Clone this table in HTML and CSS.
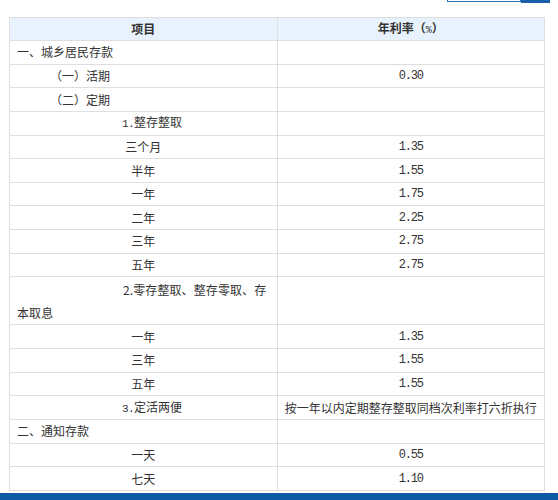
FILE: index.html
```html
<!DOCTYPE html>
<html lang="zh-CN">
<head>
<meta charset="utf-8">
<title>存款利率</title>
<link rel="stylesheet" href="styles.css">
</head>
<body>
<div class="topbar">
  <div class="search">
    <div class="search-input"></div>
    <div class="search-btn"></div>
  </div>
</div>
<table class="rates">
  <thead>
    <tr class="head"><th>项目</th><th>年利率（<span class="pct">%</span>）</th></tr>
  </thead>
  <tbody>
    <tr><td class="l1">一、城乡居民存款</td><td></td></tr>
    <tr><td class="l2">（一）活期</td><td class="num">0.30</td></tr>
    <tr><td class="l2">（二）定期</td><td></td></tr>
    <tr><td class="l3"><span class="n">1.</span>整存整取</td><td></td></tr>
    <tr><td class="c">三个月</td><td class="num">1.35</td></tr>
    <tr><td class="c">半年</td><td class="num">1.55</td></tr>
    <tr><td class="c">一年</td><td class="num">1.75</td></tr>
    <tr><td class="c">二年</td><td class="num">2.25</td></tr>
    <tr><td class="c">三年</td><td class="num">2.75</td></tr>
    <tr><td class="c">五年</td><td class="num">2.75</td></tr>
    <tr class="double"><td class="l3 wrap">2.零存整取、整存零取、存本取息</td><td></td></tr>
    <tr><td class="c">一年</td><td class="num">1.35</td></tr>
    <tr><td class="c">三年</td><td class="num">1.55</td></tr>
    <tr><td class="c">五年</td><td class="num">1.55</td></tr>
    <tr><td class="l3"><span class="n">3.</span>定活两便</td><td class="c">按一年以内定期整存整取同档次利率打六折执行</td></tr>
    <tr><td class="l1">二、通知存款</td><td></td></tr>
    <tr><td class="c">一天</td><td class="num">0.55</td></tr>
    <tr><td class="c">七天</td><td class="num">1.10</td></tr>
  </tbody>
</table>
<div class="footer"></div>
</body>
</html>
```
FILE: styles.css
```css
html, body {
  margin: 0;
  padding: 0;
  background: #ffffff;
}
body {
  width: 558px;
  height: 500px;
  overflow: hidden;
  font-family: "Noto Sans CJK SC", "Noto Sans", sans-serif;
  font-size: 12px;
  color: #333333;
}
.topbar {
  height: 17px;
  display: flex;
  justify-content: flex-end;
  padding-right: 8px;
}
.search {
  display: flex;
  height: 3px;
}
.search-input {
  width: 72px;
  height: 1px;
  border: 1px solid #2d6db3;
  border-top: none;
  background: #ffffff;
}
.search-btn {
  width: 29px;
  height: 3px;
  background: #1b5ea9;
}
.rates {
  margin-left: 9px;
  width: 536px;
  border-collapse: collapse;
  table-layout: fixed;
}
.rates tr {
  height: 23.65px;
}
.rates tr.head {
  height: 23px;
}
.rates tr.double {
  height: 48px;
}
.rates th,
.rates td {
  border: 1px solid #dedede;
  padding: 0 4px;
  line-height: 16px;
  font-weight: normal;
  vertical-align: middle;
}
.rates th {
  background: #e7f2fc;
  font-weight: bold;
  text-align: center;
  color: #333333;
}
.pct {
  font-family: "Liberation Mono", monospace;
  font-weight: normal;
  font-size: 10px;
}
.rates td.l1 {
  padding-left: 7px;
  text-align: left;
}
.rates td.l2 {
  padding-left: 40px;
  text-align: left;
}
.rates td.l3 {
  padding-left: 7px;
  text-indent: 105px;
  text-align: left;
}
.rates td.wrap {
  line-height: 23px;
  text-indent: 106px;
  letter-spacing: 0.1px;
}
.rates td.c {
  text-align: center;
}
.rates td.num {
  text-align: center;
  font-family: "Liberation Mono", monospace;
  letter-spacing: -1.2px;
}
.n {
  font-family: "Liberation Mono", monospace;
  font-size: 11px;
  letter-spacing: -0.6px;
}
.footer {
  margin-top: 2px;
  height: 12px;
  background: #0e5aa3;
}
```
